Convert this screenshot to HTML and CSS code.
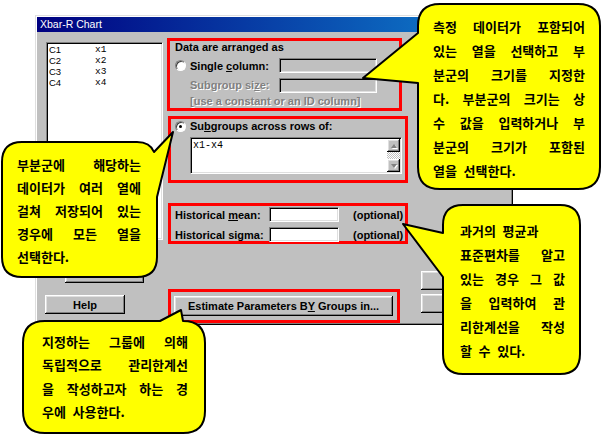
FILE: index.html
```html
<!DOCTYPE html>
<html lang="ko">
<head>
<meta charset="utf-8">
<title>Xbar-R Chart</title>
<link rel="stylesheet" href="styles.css">
</head>
<body>
<div class="page">
  <div class="window">
    <div class="titlebar">Xbar-R Chart</div>
    <div class="dlg">
      <div class="col-left">
        <div class="listbox">
          <div class="li"><span class="cn">C1</span><span class="vn">x1</span></div>
          <div class="li"><span class="cn">C2</span><span class="vn">x2</span></div>
          <div class="li"><span class="cn">C3</span><span class="vn">x3</span></div>
          <div class="li"><span class="cn">C4</span><span class="vn">x4</span></div>
        </div>
        <div class="btn btn-select"><span>Select</span></div>
        <div class="btn btn-help"><span>Help</span></div>
      </div>
      <div class="col-mid">
        <div class="mark box-data">
          <div class="grp-title">Data are arranged as</div>
          <div class="row row1">
            <span class="radio"></span>
            <span class="lbl">Single <u>c</u>olumn:</span>
            <span class="field disabled"></span>
          </div>
          <div class="row row2">
            <span class="lbl dis">Subgroup si<u>z</u>e:</span>
            <span class="field disabled"></span>
          </div>
          <div class="hint dis">[use a constant or an ID column]</div>
        </div>
        <div class="mark box-rows">
          <div class="row row-radio">
            <span class="radio on"></span>
            <span>Su<u>b</u>groups across rows of:</span>
          </div>
          <div class="memo">
            <div class="memo-text">x1-x4</div>
            <div class="vscroll">
              <span class="sb-btn"><span class="arr up"></span></span>
              <span class="sb-track"></span>
              <span class="sb-btn"><span class="arr down"></span></span>
            </div>
          </div>
        </div>
        <div class="mark box-hist">
          <div class="hrow">
            <span class="hlbl">Historical <u>m</u>ean:</span>
            <span class="field white"></span>
            <span class="opt">(optional)</span>
          </div>
          <div class="hrow">
            <span class="hlbl">Historical sigma:</span>
            <span class="field white"></span>
            <span class="opt">(optional)</span>
          </div>
        </div>
        <div class="mark box-est">
          <div class="btn btn-est"><span>Estimate Parameters B<u>Y</u> Groups in...</span></div>
        </div>
      </div>
      <div class="col-right">
        <div class="btn btn-ok"></div>
        <div class="btn btn-cancel"></div>
      </div>
    </div>
  </div>

  <svg class="callouts" width="603" height="436" viewBox="0 0 603 436">
    <path d="M440 4 H578 Q600 4 600 26 V167 Q600 189 578 189 H440 Q418 189 418 167 V83 L363 78 L418 33 V26 Q418 4 440 4 Z"/>
    <path d="M22 142 H137 Q150 142 154 152 L173 132 L157 197 V257 Q157 277 137 277 H22 Q2 277 2 257 V162 Q2 142 22 142 Z"/>
    <path d="M463 205 H560 Q580 205 580 225 V354 Q580 374 560 374 H463 Q443 374 443 354 V277 L403 224 L443 233 V225 Q443 205 463 205 Z"/>
    <path d="M45 321 H160 L181 310 L183 321 Q205 321 205 343 V411 Q205 433 183 433 H45 Q23 433 23 411 V343 Q23 321 45 321 Z"/>
  </svg>

  <div class="note note-1">
    <span>측정 데이터가 포함되어</span>
    <span>있는 열을 선택하고 부</span>
    <span>분군의 크기를 지정한</span>
    <span>다. 부분군의 크기는 상</span>
    <span>수 값을 입력하거나 부</span>
    <span>분군의 크기가 포함된</span>
    <span class="end">열을 선택한다.</span>
  </div>
  <div class="note note-2">
    <span>부분군에 해당하는</span>
    <span>데이터가 여러 열에</span>
    <span>걸쳐 저장되어 있는</span>
    <span>경우에 모든 열을</span>
    <span class="end">선택한다.</span>
  </div>
  <div class="note note-3">
    <span class="end">과거의 평균과</span>
    <span>표준편차를 알고</span>
    <span>있는 경우 그 값</span>
    <span>을 입력하여 관</span>
    <span>리한계선을 작성</span>
    <span class="end">할 수 있다.</span>
  </div>
  <div class="note note-4">
    <span>지정하는 그룹에 의해</span>
    <span>독립적으로 관리한계선</span>
    <span>을 작성하고자 하는 경</span>
    <span class="end">우에 사용한다.</span>
  </div>
</div>
</body>
</html>
```

FILE: styles.css
```css
html, body {
  margin: 0;
  padding: 0;
  background: #fff;
}

.page {
  position: relative;
  width: 603px;
  height: 436px;
  overflow: hidden;
  box-sizing: border-box;
  padding: 15px 0 0 35px;
  font-family: "Liberation Sans", Arial, sans-serif;
}

/* ---------- dialog window ---------- */
.window {
  width: 478px;
  height: 310px;
  box-sizing: border-box;
  border: 1px solid;
  border-color: #dfdfdf #000 #000 #dfdfdf;
  box-shadow: inset 1px 1px #fff, inset -1px -1px #808080;
  padding: 1px;
  background: #c0c0c0;
  display: flex;
  flex-direction: column;
  font-size: 11px;
  font-weight: bold;
  color: #000;
}

.titlebar {
  height: 15px;
  flex: none;
  background: linear-gradient(90deg, #000080, #1084d0);
  color: #fff;
  font-size: 10.5px;
  font-weight: normal;
  line-height: 15px;
  padding-left: 3px;
}

.dlg {
  flex: 1;
  display: flex;
}

u {
  text-decoration: underline;
  text-underline-offset: 1px;
}

/* ---------- left column ---------- */
.col-left {
  width: 117px;
  margin-left: 9px;
  padding-top: 10px;
  display: flex;
  flex-direction: column;
  align-items: flex-start;
}

.listbox {
  width: 117px;
  height: 198px;
  box-sizing: border-box;
  background: #fff;
  border: 1px solid;
  border-color: #808080 #fff #fff #808080;
  box-shadow: inset 1px 1px #000, inset -1px -1px #dfdfdf;
  padding: 1px 0 0 2px;
  font-weight: normal;
}

.li {
  display: flex;
  font-size: 9.5px;
  line-height: 11px;
}

.cn {
  width: 46px;
  font-family: "Liberation Sans", Arial, sans-serif;
}

.vn {
  font-family: "Liberation Mono", "Courier New", monospace;
  font-size: 9.5px;
}

.btn {
  display: flex;
  align-items: center;
  justify-content: center;
  box-sizing: border-box;
  background: #c0c0c0;
  box-shadow: inset -1px -1px #000, inset 1px 1px #fff,
              inset -2px -2px #808080, inset 2px 2px #dfdfdf;
  font-size: 11px;
  font-weight: bold;
  color: #000;
  white-space: nowrap;
}

.btn-select {
  width: 79px;
  height: 20px;
  margin: 23px 0 0 19px;
}

.btn-help {
  width: 80px;
  height: 19px;
  margin: 12px 0 0 -1px;
}

/* ---------- middle column ---------- */
.col-mid {
  width: 242px;
  margin-left: 4px;
  padding-top: 6px;
  display: flex;
  flex-direction: column;
  align-items: flex-start;
}

.mark {
  border: 3px solid #f00;
  box-sizing: border-box;
}

.box-data {
  width: 235px;
  height: 73px;
  padding-left: 5px;
}

.grp-title {
  line-height: 12px;
}

.row {
  display: flex;
  align-items: center;
}

.row1 {
  height: 17px;
  margin-top: 4px;
}

.row2 {
  height: 16px;
  margin-top: 3px;
  padding-left: 15px;
}

.hint {
  line-height: 16px;
  padding-left: 15px;
  white-space: nowrap;
}

.radio {
  position: relative;
  flex: none;
  width: 11px;
  height: 11px;
  box-sizing: border-box;
  border-radius: 50%;
  background: #fff;
  border: 1px solid;
  border-color: #808080 #fff #fff #808080;
  box-shadow: inset 1px 1px #404040;
  margin-right: 4px;
}

.radio.on::after {
  content: "";
  position: absolute;
  left: 3px;
  top: 3px;
  width: 3px;
  height: 3px;
  border-radius: 50%;
  background: #000;
}

.lbl {
  width: 89px;
  flex: none;
  white-space: nowrap;
}

.field {
  flex: none;
  width: 98px;
  height: 15px;
  box-sizing: border-box;
  border: 1px solid;
  border-color: #808080 #fff #fff #808080;
  box-shadow: inset 1px 1px #000, inset -1px -1px #dfdfdf;
}

.field.disabled {
  background: #c0c0c0;
}

.field.white {
  background: #fff;
  width: 70px;
}

.dis {
  color: #808080;
  text-shadow: 1px 1px 0 #fff;
}

.box-rows {
  width: 240px;
  height: 67px;
  margin-top: 5px;
  margin-left: 1px;
  padding-left: 4px;
}

.row-radio {
  height: 14px;
  white-space: nowrap;
}

.memo {
  display: flex;
  width: 212px;
  height: 37px;
  margin: 4px 0 0 15px;
  box-sizing: border-box;
  background: #fff;
  border: 1px solid;
  border-color: #808080 #fff #fff #808080;
  box-shadow: inset 1px 1px #000, inset -1px -1px #dfdfdf;
  padding: 1px;
}

.memo-text {
  flex: 1;
  font-family: "Liberation Mono", "Courier New", monospace;
  font-weight: normal;
  font-size: 10px;
  line-height: 12px;
  padding: 1px 0 0 1px;
}

.vscroll {
  width: 13px;
  display: flex;
  flex-direction: column;
}

.sb-btn {
  height: 13px;
  flex: none;
  display: flex;
  align-items: center;
  justify-content: center;
  background: #c0c0c0;
  box-shadow: inset -1px -1px #000, inset 1px 1px #fff,
              inset -2px -2px #808080, inset 2px 2px #dfdfdf;
}

.sb-track {
  flex: 1;
  background: repeating-conic-gradient(#c0c0c0 0 25%, #fff 0 50%) 0 0 / 2px 2px;
}

.arr {
  width: 0;
  height: 0;
  border-left: 3.5px solid transparent;
  border-right: 3.5px solid transparent;
  filter: drop-shadow(1px 1px 0 #fff);
}

.arr.up {
  border-bottom: 4px solid #808080;
}

.arr.down {
  border-top: 4px solid #808080;
}

.box-hist {
  width: 240px;
  height: 41px;
  margin-top: 20px;
  margin-left: 1px;
  padding: 1px 0 0 4px;
}

.hrow {
  display: flex;
  align-items: center;
  height: 15px;
  white-space: nowrap;
}

.hrow + .hrow {
  margin-top: 5px;
}

.hlbl {
  width: 94px;
  flex: none;
}

.opt {
  margin-left: 14px;
}

.box-est {
  width: 232px;
  height: 34px;
  margin-top: 45px;
  margin-left: 1px;
  padding: 4px 0 0 3px;
}

.btn-est {
  width: 219px;
  height: 20px;
}

/* ---------- right column ---------- */
.col-right {
  width: 80px;
  margin-left: 12px;
  display: flex;
  flex-direction: column;
}

.btn-ok {
  height: 19px;
  margin-top: 239px;
}

.btn-cancel {
  height: 19px;
  margin-top: 4px;
}

/* ---------- callouts (annotation overlay) ---------- */
.callouts {
  position: absolute;
  left: 0;
  top: 0;
  pointer-events: none;
}

.callouts path {
  fill: #ffff00;
  stroke: #000;
  stroke-width: 2;
  stroke-linejoin: round;
}

.note {
  position: absolute;
  font-family: "Noto Sans CJK KR", "Noto Sans CJK SC", sans-serif;
  font-weight: bold;
  font-size: 13px;
  color: #000;
}

.note > span {
  display: block;
  text-align: justify;
  text-align-last: justify;
}

.note > span.end {
  text-align: left;
  text-align-last: left;
  word-spacing: 3px;
}

.note-1 {
  left: 433px;
  top: 15px;
  width: 152px;
  line-height: 24px;
}

.note-2 {
  left: 17px;
  top: 153px;
  width: 124px;
  line-height: 23px;
}

.note-3 {
  left: 460px;
  top: 219px;
  width: 105px;
  line-height: 24px;
}

.note-4 {
  left: 42px;
  top: 330px;
  width: 146px;
  line-height: 23.3px;
}
```
